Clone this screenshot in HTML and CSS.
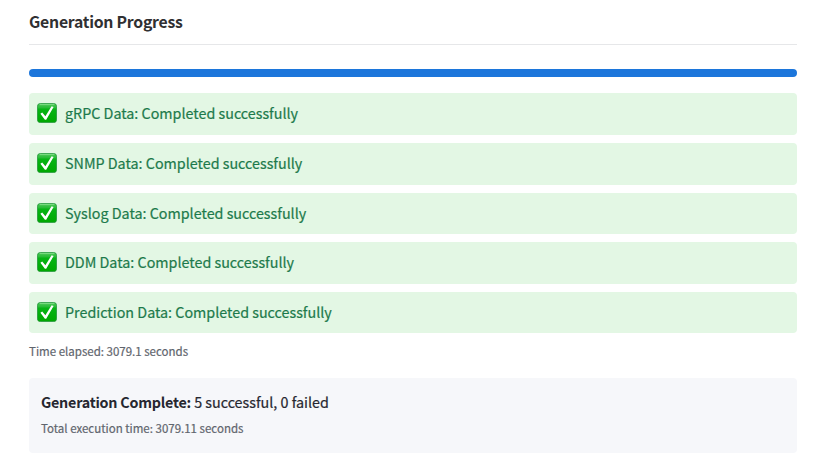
FILE: index.html
```
<!DOCTYPE html>
<html lang="en">
<head>
<meta charset="utf-8">
<title>Generation Progress</title>
<link rel="stylesheet" href="styles.css">
</head>
<body>
<svg class="defs" width="0" height="0" aria-hidden="true">
  <defs>
    <linearGradient id="green" x1="0" y1="0" x2="0" y2="1">
      <stop offset="0" stop-color="#4fc95a"/>
      <stop offset="0.22" stop-color="#2abb38"/>
      <stop offset="0.3" stop-color="#06b414"/>
      <stop offset="1" stop-color="#00a800"/>
    </linearGradient>
    <symbol id="check" viewBox="0 0 20 20">
      <rect x="0.4" y="0.4" width="19.2" height="19.2" rx="3.2" fill="url(#green)" stroke="#21943a" stroke-width="0.8"/>
      <path d="M3 1.6H17" stroke="#7ddc85" stroke-width="1" stroke-linecap="round"/>
      <path d="M3.4 10.8L5.2 9.4L8.4 13.2L14.6 3.3L16.6 4L9.2 16.7H7.9Z" fill="#fff"/>
    </symbol>
  </defs>
</svg>
<main class="page">
  <h1 class="title">Generation Progress</h1>
  <div class="progress"></div>
  <ul class="steps">
    <li class="step"><svg class="icon"><use href="#check"/></svg><span>gRPC Data: Completed successfully</span></li>
    <li class="step"><svg class="icon"><use href="#check"/></svg><span>SNMP Data: Completed successfully</span></li>
    <li class="step"><svg class="icon"><use href="#check"/></svg><span>Syslog Data: Completed successfully</span></li>
    <li class="step"><svg class="icon"><use href="#check"/></svg><span>DDM Data: Completed successfully</span></li>
    <li class="step"><svg class="icon"><use href="#check"/></svg><span>Prediction Data: Completed successfully</span></li>
  </ul>
  <p class="note">Time elapsed: 3079.1 seconds</p>
  <section class="summary">
    <p class="result"><strong>Generation Complete:</strong> 5 successful, 0 failed</p>
    <p class="note">Total execution time: 3079.11 seconds</p>
  </section>
</main>
</body>
</html>
```
FILE: styles.css
```
* { box-sizing: border-box; }
body {
  margin: 0;
  background: #fff;
  color: #262730;
  font-family: "Noto Sans CJK SC", "Noto Sans", sans-serif;
  font-size: 14.32px;
  line-height: 25.6px;
  -webkit-text-stroke: 0.2px currentColor;
}
.defs { position: absolute; }
.page { padding: 0 16px 0 29px; }
.title {
  margin: 0;
  height: 45px;
  padding-top: 9px;
  border-bottom: 1px solid #e6e7e9;
  font-size: 15.8px;
  font-weight: 700;
  line-height: 26px;
  letter-spacing: -0.25px;
  color: #303032;
  -webkit-text-stroke: 0;
}
.progress {
  height: 8px;
  margin: 24px 0 16.4px;
  border-radius: 4px;
  background: #1c76db;
}
.steps {
  display: flex;
  flex-direction: column;
  gap: 8px;
  margin: 0;
  padding: 0;
  list-style: none;
}
.step {
  display: flex;
  align-items: center;
  gap: 8px;
  height: 41.6px;
  padding: 0 8px 2px;
  border-radius: 4px;
  background: #e3f7e4;
  color: #1d7a4b;
}
.icon {
  flex: none;
  width: 20px;
  height: 20px;
  margin-top: 0.4px;
}
.note {
  margin: 0;
  font-size: 11.5px;
  line-height: 20px;
  color: #5f656d;
}
.steps + .note { margin-top: 7.6px; }
.summary {
  height: 75px;
  margin-top: 17px;
  padding: 11px 12px;
  border-radius: 4px;
  background: #f6f7fa;
}
.result { margin: 0 0 3px; }
.result strong {
  font-weight: 700;
  letter-spacing: -0.23px;
  -webkit-text-stroke: 0;
}
```
